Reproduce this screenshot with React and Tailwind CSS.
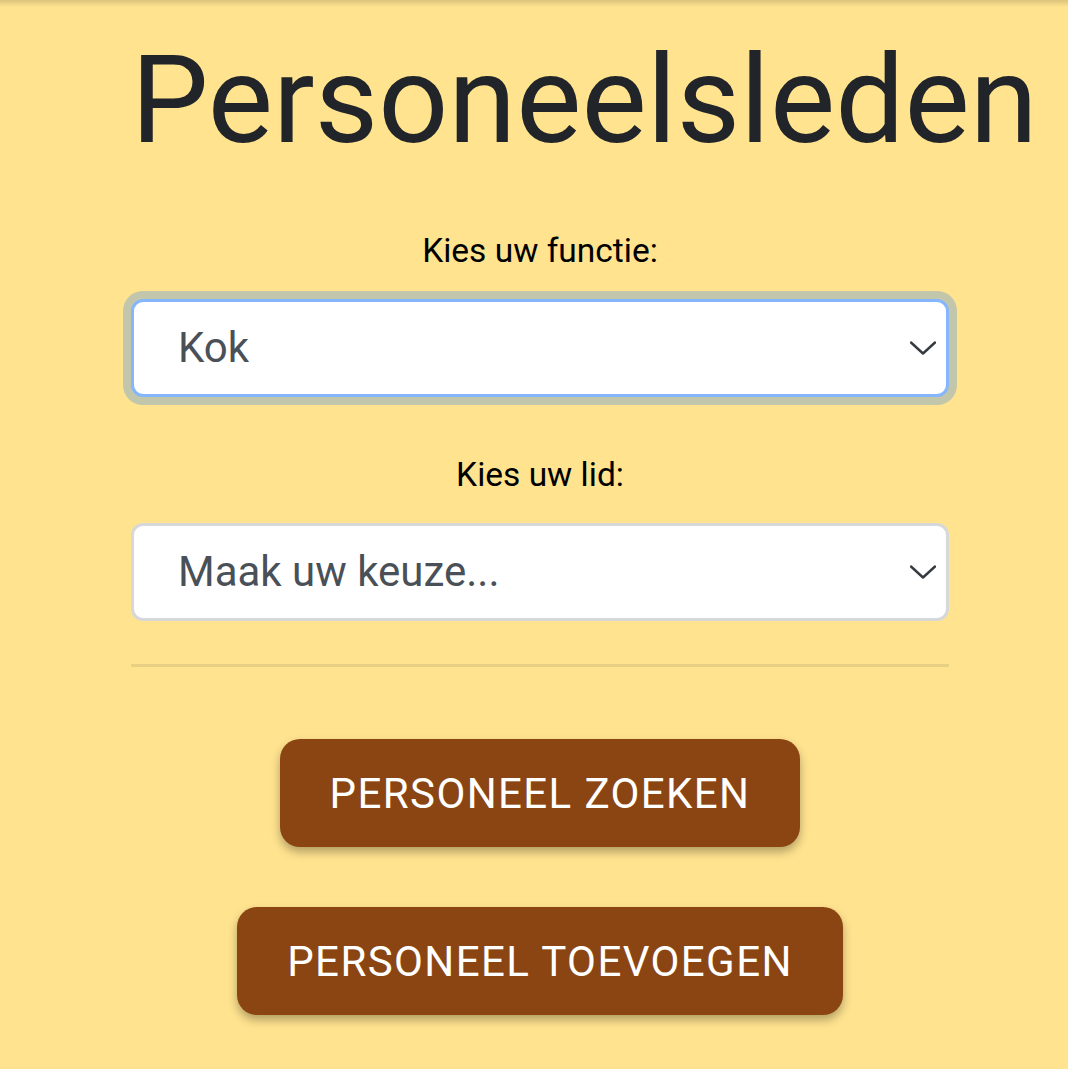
import React from "react";

function Chevron() {
  return (
    <svg width="26" height="14" viewBox="0 0 26 14" fill="none" className="shrink-0">
      <path d="M1 1.5 L13 12.5 L25 1.5" stroke="#343a40" strokeWidth="2.4" strokeLinecap="round" strokeLinejoin="round" />
    </svg>
  );
}

export default function App() {
  return (
    <div
      className="relative min-h-screen w-full bg-[#ffe38f] overflow-hidden"
      style={{ fontFamily: "Roboto, 'Liberation Sans', sans-serif" }}
    >
      <div className="absolute top-0 left-0 right-0 h-[7px] bg-gradient-to-b from-[rgba(0,0,0,0.14)] to-transparent" />
      <div className="ml-[131px] w-[818px] flex flex-col pt-[27px]">
        <h1 className="text-[123px] leading-[146px] text-[#212529] whitespace-nowrap font-normal">
          Personeelsleden
        </h1>

        <label className="mt-[58px] text-center text-[33.5px] leading-[40px] text-black">
          Kies uw functie:
        </label>
        <div className="mt-[28px] h-[98px] rounded-[12px] border-[3px] border-[#86b7fe] bg-white shadow-[0_0_0_8px_rgba(13,110,253,0.25)] flex items-center justify-between pl-[44px] pr-[10px]">
          <span className="text-[42px] text-[#495057] leading-none">Kok</span>
          <Chevron />
        </div>

        <label className="mt-[58px] text-center text-[33.5px] leading-[40px] text-black">
          Kies uw lid:
        </label>
        <div className="mt-[28px] h-[98px] rounded-[12px] border-[3px] border-[#d6d8da] bg-white flex items-center justify-between pl-[44px] pr-[10px]">
          <span className="text-[42px] text-[#495057] leading-none">Maak uw keuze...</span>
          <Chevron />
        </div>

        <div className="mt-[43px] h-[3px] bg-[#e7cf84]" />

        <div className="mt-[72px] flex flex-col items-center gap-[60px]">
          <button className="h-[108px] px-[50px] rounded-[20px] bg-[#8b4513] text-white text-[42px] uppercase tracking-[1.4px] shadow-[0_5px_10px_rgba(0,0,0,0.3)]">
            Personeel zoeken
          </button>
          <button className="h-[108px] px-[50px] rounded-[20px] bg-[#8b4513] text-white text-[42px] uppercase tracking-[1.4px] shadow-[0_5px_10px_rgba(0,0,0,0.3)]">
            Personeel toevoegen
          </button>
        </div>
      </div>
    </div>
  );
}
